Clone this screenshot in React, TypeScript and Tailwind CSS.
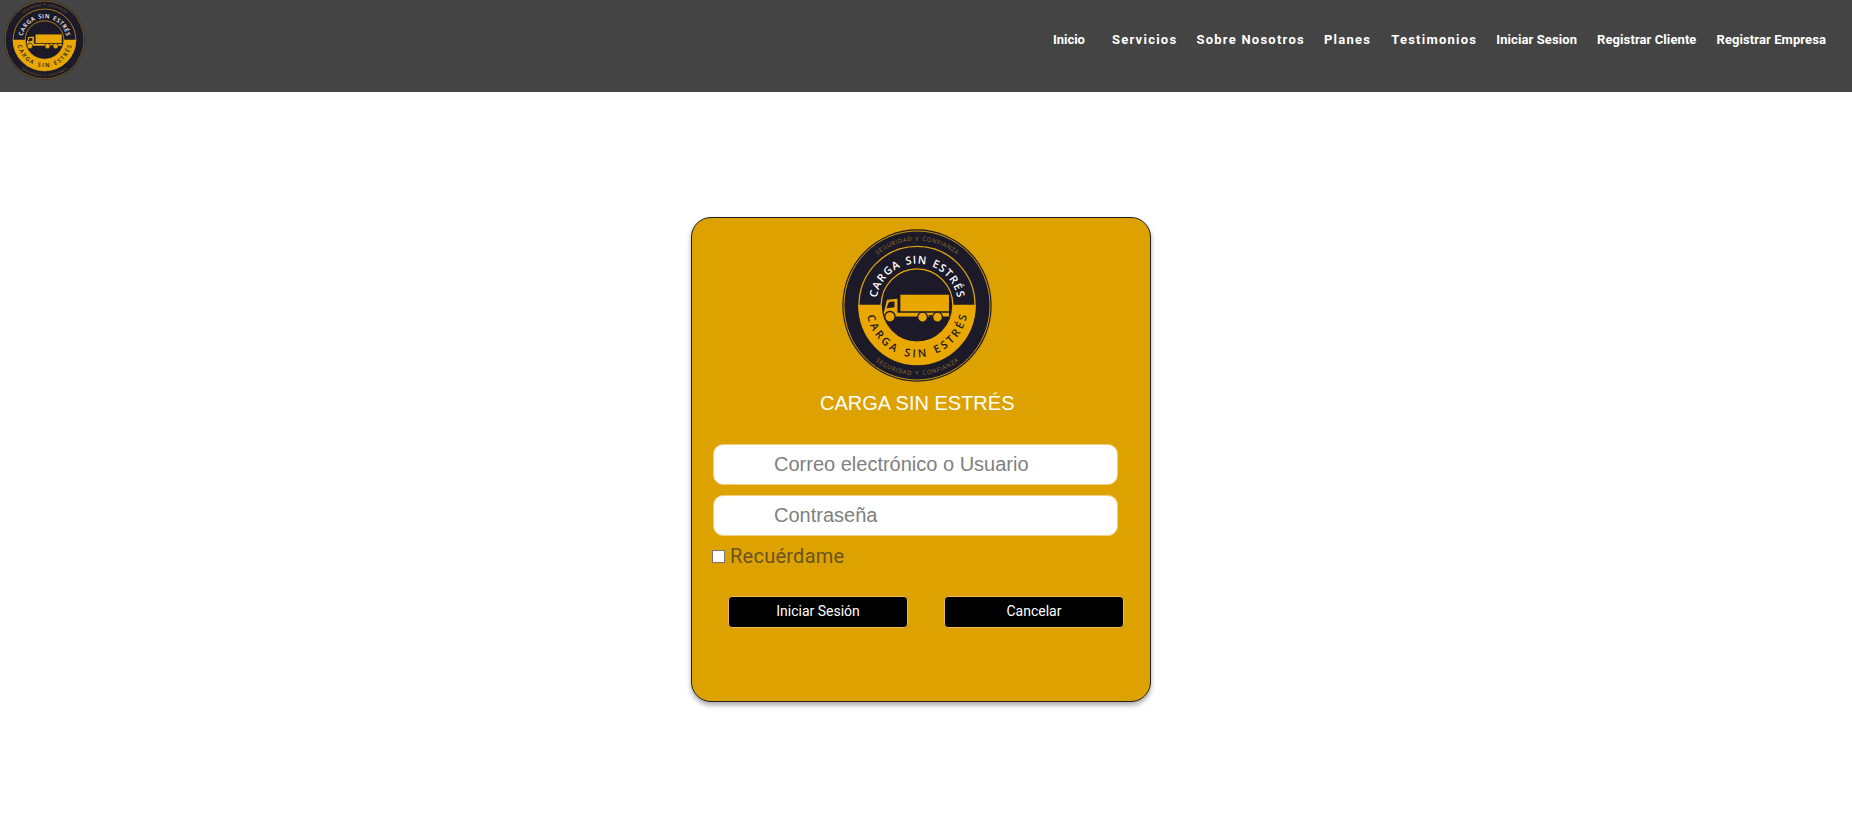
import React from "react";

function Logo({ id, className }: { id: string; className: string }) {
  return (
    <svg className={className} viewBox="-230 -230 460 460" preserveAspectRatio="none" aria-label="Carga Sin Estrés">
      <defs>
        <path id={`${id}-top`} d="M-126 8L-126 0A126 126 0 0 1 126 0L126 8" />
        <path id={`${id}-bottom`} d="M-156 0A156 156 0 0 0 156 0" />
        <path id={`${id}-small-top`} d="M-195 0A195 195 0 0 1 195 0" />
        <path id={`${id}-small-bottom`} d="M-210 0A210 210 0 0 0 210 0" />
      </defs>
      <circle r="229" fill="#1c1a28" />
      <circle r="224" fill="none" stroke="#d29a08" strokeWidth="3" />
      <circle r="178" fill="none" stroke="#dfa20a" strokeWidth="4" />
      <path d="M-180 -2H180A180 180 0 0 1 -180 -2Z" fill="#eaa700" />
      <circle r="110" fill="#1c1a28" stroke="#eaa700" strokeWidth="4" />
      <g fontFamily="'Open Sans', 'Noto Sans', sans-serif" textAnchor="middle">
        <g fontSize="33" fontWeight="600">
          <text fill="#ffffff" wordSpacing="4">
            <textPath href={`#${id}-top`} startOffset="50%" textLength="350">CARGA SIN ESTRÉS</textPath>
          </text>
          <text fill="#1c1a28" wordSpacing="4">
            <textPath href={`#${id}-bottom`} startOffset="50%" textLength="428">CARGA SIN ESTRÉS</textPath>
          </text>
        </g>
        <g fontSize="18" fill="#94742a" wordSpacing="3">
          <text>
            <textPath href={`#${id}-small-top`} startOffset="50%" textLength="262">SEGURIDAD Y CONFIANZA</textPath>
          </text>
          <text>
            <textPath href={`#${id}-small-bottom`} startOffset="50%" textLength="274">SEGURIDAD Y CONFIANZA</textPath>
          </text>
        </g>
      </g>
      <g fill="#eaa700">
        <path d="M-51 -32H98V17H-51Z" />
        <path d="M-92 -17L-60 -20V22H98V33H-98L-102 22Z" />
      </g>
      <path d="M-87 -8Q-86 -11 -82 -11L-69 -12V5L-94 8Z" fill="#1c1a28" />
      <path d="M36 31H46" stroke="#1c1a28" strokeWidth="5" />
      <g fill="#eaa700" stroke="#1c1a28" strokeWidth="4">
        <circle cx="-83" cy="34" r="16" />
        <circle cx="17" cy="35" r="15" />
        <circle cx="63" cy="35" r="15" />
      </g>
    </svg>
  );
}

const links = [
  { label: "Inicio", style: "mr-[27px]" },
  { label: "Servicios", style: "mr-[19px] tracking-[1.25px]" },
  { label: "Sobre Nosotros", style: "mr-[19px] tracking-[1.25px]" },
  { label: "Planes", style: "mr-[20px] tracking-[1.25px]" },
  { label: "Testimonios", style: "mr-[19px] tracking-[1.25px]" },
  { label: "Iniciar Sesion", style: "mr-[20px] tracking-[0.09px]" },
  { label: "Registrar Cliente", style: "mr-[20px] tracking-[0.09px]" },
  { label: "Registrar Empresa", style: "tracking-[0.09px]" },
];

const inputClass =
  "block h-[41px] w-[405px] rounded-[10px] border border-[#f0cf80] bg-white pl-[60px] pr-3 font-['Liberation_Sans',Arial,sans-serif] text-[20px] text-[#444] placeholder:text-[#808080] placeholder:opacity-100 outline-none";

const buttonClass =
  "h-8 w-[180px] rounded-[4px] border border-[#e6b85a] bg-black pb-0.5 text-[14px] leading-none text-white";

export default function App() {
  return (
    <div className="flex h-[840px] w-full flex-col overflow-hidden bg-white font-[Roboto,sans-serif]">
      <header className="flex h-[92px] shrink-0 items-start justify-between bg-[#444444] pl-1 pr-[26px]">
        <Logo id="nav" className="h-20 w-[81px]" />
        <nav className="flex pt-[30px] text-[13px] font-bold leading-5 whitespace-nowrap text-white">
          {links.map(({ label, style }) => (
            <a key={label} href="#" className={style}>
              {label}
            </a>
          ))}
        </nav>
      </header>
      <main className="pl-[691px] pt-[125px]">
        <form className="flex h-[485px] w-[460px] flex-col rounded-[20px] border border-[#222] bg-[#dda200] pt-[11px] shadow-[0_3px_5px_rgba(0,0,0,0.35)]">
          <Logo id="card" className="ml-[150px] h-[153px] w-[150px]" />
          <h1 className="mt-[9px] ml-[128px] font-['Liberation_Sans',Arial,sans-serif] text-[20px] leading-6 whitespace-nowrap text-white">
            CARGA SIN ESTRÉS
          </h1>
          <div className="mt-[29px] ml-[21px] flex flex-col gap-[10px]">
            <input className={inputClass} placeholder="Correo electrónico o Usuario" />
            <input className={inputClass} type="password" placeholder="Contraseña" />
          </div>
          <label className="mt-[8px] ml-[20px] flex h-6 items-center gap-[5px] text-[20px] leading-6 tracking-[0.25px] text-[#6b5322]">
            <input type="checkbox" className="size-[13px] appearance-none border border-[#767676] bg-white" />
            Recuérdame
          </label>
          <div className="mt-[28px] ml-[36px] flex gap-[36px]">
            <button type="button" className={buttonClass}>Iniciar Sesión</button>
            <button type="button" className={buttonClass}>Cancelar</button>
          </div>
        </form>
      </main>
    </div>
  );
}
